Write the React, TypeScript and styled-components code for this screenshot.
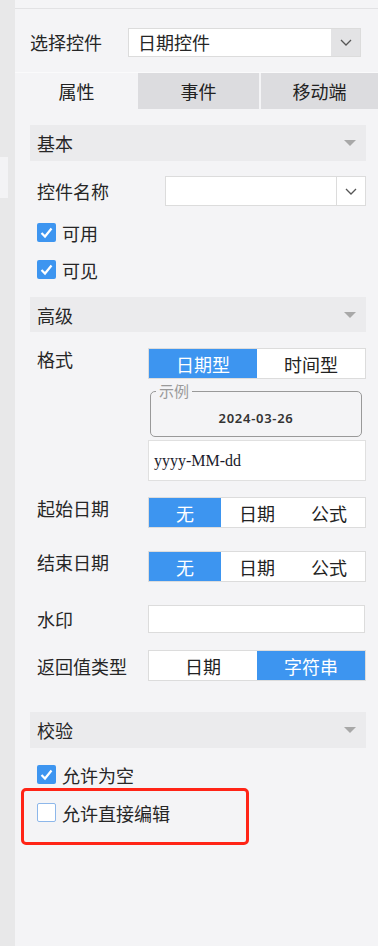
import React from "react";
import styled, { createGlobalStyle } from "styled-components";

const GlobalStyle = createGlobalStyle`
  html, body {
    margin: 0;
    padding: 0;
    background: #f4f4f6;
  }
  body {
    font-family: "Noto Sans CJK SC", "Noto Sans", sans-serif;
    color: #262626;
  }
  * {
    box-sizing: border-box;
  }
`;

const Chevron = () => (
  <svg width="12" height="7" viewBox="0 0 12 7">
    <polyline
      points="1,1 6,6 11,1"
      fill="none"
      stroke="#555"
      strokeWidth="1.3"
    />
  </svg>
);

const Caret = () => (
  <svg width="12" height="6" viewBox="0 0 12 6">
    <polygon points="0,0 12,0 6,6" fill="#a8a8a8" />
  </svg>
);

const CheckBox: React.FC<{ checked: boolean }> = ({ checked }) => (
  <Box $checked={checked}>
    {checked && (
      <svg width="19" height="19" viewBox="0 0 19 19">
        <path
          d="M4.5 10 L8 13.5 L14.5 5.5"
          fill="none"
          stroke="#fff"
          strokeWidth="2.2"
        />
      </svg>
    )}
  </Box>
);

const Segmented: React.FC<{ items: string[]; active: number }> = ({
  items,
  active,
}) => (
  <Segment $cols={items.length}>
    {items.map((item, i) => (
      <SegItem key={item} $active={i === active}>
        {item}
      </SegItem>
    ))}
  </Segment>
);

const App: React.FC = () => {
  return (
    <Page>
      <GlobalStyle />
      <LeftStrip>
        <StripTab />
      </LeftStrip>
      <Panel>
        <TopBar />
        <SelectRow>
          <SelectLabel>选择控件</SelectLabel>
          <Select>
            <SelectValue>日期控件</SelectValue>
            <DropBtn>
              <Chevron />
            </DropBtn>
          </Select>
        </SelectRow>
        <Tabs>
          <Tab $w="123px" $active>
            属性
          </Tab>
          <Tab $w="121px">事件</Tab>
          <Tab $w="auto" $split>
            移动端
          </Tab>
        </Tabs>

        <Body>
          <SectionHeader $mt={16}>
            基本
            <Caret />
          </SectionHeader>
          <Row $mt={15}>
            <Label $w={128}>控件名称</Label>
            <Combo>
              <ComboValue />
              <ComboBtn>
                <Chevron />
              </ComboBtn>
            </Combo>
          </Row>
          <CheckRow $mt={17}>
            <CheckBox checked />
            可用
          </CheckRow>
          <CheckRow $mt={18}>
            <CheckBox checked />
            可见
          </CheckRow>

          <SectionHeader $mt={18} $h={35}>
            高级
            <Caret />
          </SectionHeader>
          <Row $mt={16} $top>
            <Label $w={111} $lh={22}>
              格式
            </Label>
            <RightCol>
              <Segmented items={["日期型", "时间型"]} active={0} />
              <Example>
                <Legend>示例</Legend>
                <DateText>2024-03-26</DateText>
              </Example>
              <PatternBox>yyyy-MM-dd</PatternBox>
            </RightCol>
          </Row>
          <Row $mt={16} $top>
            <Label $w={111} $lh={22}>
              起始日期
            </Label>
            <RightCol>
              <Segmented items={["无", "日期", "公式"]} active={0} />
            </RightCol>
          </Row>
          <Row $mt={23} $top>
            <Label $w={111} $lh={22}>
              结束日期
            </Label>
            <RightCol>
              <Segmented items={["无", "日期", "公式"]} active={0} />
            </RightCol>
          </Row>
          <Row $mt={23}>
            <Label $w={111}>水印</Label>
            <RightCol>
              <PlainInput />
            </RightCol>
          </Row>
          <Row $mt={17}>
            <Label $w={111}>返回值类型</Label>
            <RightCol>
              <Segmented items={["日期", "字符串"]} active={1} />
            </RightCol>
          </Row>

          <SectionHeader $mt={31}>
            校验
            <Caret />
          </SectionHeader>
          <CheckRow $mt={17}>
            <CheckBox checked />
            允许为空
          </CheckRow>
          <CheckRow $mt={19}>
            <Highlight />
            <CheckBox checked={false} />
            允许直接编辑
          </CheckRow>
        </Body>
      </Panel>
    </Page>
  );
};

const Page = styled.div`
  display: flex;
  width: 378px;
  height: 946px;
  overflow: hidden;
  background: #f4f4f6;
`;

const LeftStrip = styled.div`
  width: 15px;
  flex-shrink: 0;
  background: #e8e8e9;
  padding-top: 157px;
`;

const StripTab = styled.div`
  width: 8px;
  height: 41px;
  background: #f3f3f5;
`;

const Panel = styled.div`
  flex: 1;
  display: flex;
  flex-direction: column;
  background: #f4f4f6;
`;

const TopBar = styled.div`
  height: 9px;
  border-bottom: 1px solid #e2e2e4;
`;

const SelectRow = styled.div`
  display: flex;
  align-items: flex-start;
  height: 63px;
  padding: 19px 17px 0 15px;
`;

const SelectLabel = styled.div`
  width: 98px;
  font-size: 18px;
  line-height: 29px;
  flex-shrink: 0;
`;

const Select = styled.div`
  display: flex;
  width: 233px;
  height: 29px;
  border: 1px solid #dcdcdc;
  background: #fff;
`;

const SelectValue = styled.div`
  flex: 1;
  padding-left: 9px;
  font-size: 18px;
  line-height: 27px;
`;

const DropBtn = styled.div`
  width: 29px;
  display: flex;
  align-items: center;
  justify-content: center;
  background: #e3e3e5;
`;

const Tabs = styled.div`
  display: flex;
  height: 37px;
  border-top: 1px solid #fafafb;
`;

const Tab = styled.div<{ $w: string; $active?: boolean; $split?: boolean }>`
  width: ${(p) => p.$w};
  flex: ${(p) => (p.$w === "auto" ? 1 : "none")};
  display: flex;
  align-items: center;
  justify-content: center;
  font-size: 18px;
  color: #222;
  background: ${(p) => (p.$active ? "#f4f4f6" : "#dcdcdf")};
  border-left: ${(p) => (p.$split ? "2px solid #f4f4f6" : "none")};
`;

const Body = styled.div`
  padding: 0 12px 0 15px;
`;

const SectionHeader = styled.div<{ $mt: number; $h?: number }>`
  margin-top: ${(p) => p.$mt}px;
  height: ${(p) => p.$h ?? 36}px;
  display: flex;
  align-items: center;
  justify-content: space-between;
  padding: 0 10px 0 7px;
  background: #ebebed;
  font-size: 18px;
  color: #262626;
`;

const Row = styled.div<{ $mt: number; $top?: boolean }>`
  display: flex;
  align-items: ${(p) => (p.$top ? "flex-start" : "center")};
  margin-top: ${(p) => p.$mt}px;
  padding-left: 7px;
`;

const Label = styled.div<{ $w: number; $lh?: number }>`
  width: ${(p) => p.$w}px;
  flex-shrink: 0;
  font-size: 18px;
  line-height: ${(p) => p.$lh ?? 26}px;
  color: #262626;
`;

const RightCol = styled.div`
  flex: 1;
  display: flex;
  flex-direction: column;
`;

const Combo = styled.div`
  flex: 1;
  display: flex;
  height: 30px;
  border: 1px solid #dcdcdc;
  background: #fff;
`;

const ComboValue = styled.div`
  flex: 1;
`;

const ComboBtn = styled.div`
  width: 29px;
  display: flex;
  align-items: center;
  justify-content: center;
  border-left: 1px solid #dcdcdc;
`;

const Segment = styled.div<{ $cols: number }>`
  display: grid;
  grid-template-columns: repeat(${(p) => p.$cols}, 1fr);
  height: 31px;
  border: 1px solid #dcdcdc;
  background: #fff;
`;

const SegItem = styled.div<{ $active: boolean }>`
  display: flex;
  align-items: center;
  justify-content: center;
  font-size: 18px;
  background: ${(p) => (p.$active ? "#3d95f0" : "#fff")};
  color: ${(p) => (p.$active ? "#fff" : "#222")};
`;

const Example = styled.fieldset`
  margin: 3px 4px 0 2px;
  padding: 0;
  border: 1px solid #999;
  border-radius: 5px;
  min-width: 0;
`;

const Legend = styled.legend`
  margin-left: 5px;
  padding: 0 3px;
  font-size: 15px;
  line-height: 18px;
  color: #9a9a9a;
`;

const DateText = styled.div`
  text-align: center;
  font-family: "Noto Sans", sans-serif;
  font-size: 13px;
  font-weight: 600;
  letter-spacing: 0.7px;
  line-height: 36px;
  color: #333;
`;

const PatternBox = styled.div`
  margin-top: 3px;
  height: 41px;
  padding-left: 5px;
  background: #fff;
  border: 1px solid #e0e0e0;
  font-family: "Liberation Serif", serif;
  font-size: 16px;
  line-height: 39px;
  color: #1a1a2a;
`;

const PlainInput = styled.div`
  height: 28px;
  margin-right: 1px;
  background: #fff;
  border: 1px solid #dcdcdc;
`;

const CheckRow = styled.div<{ $mt: number }>`
  position: relative;
  display: flex;
  align-items: center;
  gap: 6px;
  height: 19px;
  margin-top: ${(p) => p.$mt}px;
  padding-left: 7px;
  font-size: 18px;
  color: #262626;
`;

const Box = styled.span<{ $checked: boolean }>`
  width: 19px;
  height: 19px;
  flex-shrink: 0;
  border-radius: 2px;
  background: ${(p) => (p.$checked ? "#3d95f0" : "#fff")};
  border: ${(p) => (p.$checked ? "none" : "1.5px solid #8db7ea")};
  display: flex;
`;

const Highlight = styled.div`
  position: absolute;
  top: -15px;
  left: -9px;
  width: 228px;
  height: 57px;
  border: 3px solid #ff2416;
  border-radius: 5px;
  pointer-events: none;
`;

export default App;
